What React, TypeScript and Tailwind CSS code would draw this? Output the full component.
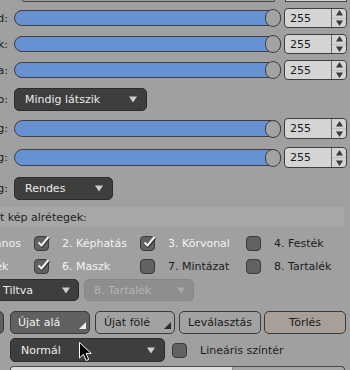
import React from "react";

const DownArrow = ({ color = "#cfcfcf" }: { color?: string }) => (
  <svg width="8" height="7" viewBox="0 0 8 7">
    <path d="M0 0.5 H8 L4 6.5 Z" fill={color} />
  </svg>
);

const Spin = ({ h }: { h: string }) => (
  <div className={`ml-[3px] w-[63px] ${h} flex shrink-0 rounded-[4px] border border-[#3e3e3e] bg-[#d4d4d4] overflow-hidden`}>
    <div className="flex-1 flex items-center pl-[5px] text-[#1a1a1a]">255</div>
    <div className="w-[15px] border-l border-[#6a6a6a] flex flex-col">
      <div className="flex-1 flex items-center justify-center border-b border-[#bdbdbd]">
        <svg width="7" height="6" viewBox="0 0 7 6">
          <path d="M0 5.5 H7 L3.5 0 Z" fill="#3a3a3a" />
        </svg>
      </div>
      <div className="flex-1 flex items-center justify-center">
        <svg width="7" height="6" viewBox="0 0 7 6">
          <path d="M0 0.5 H7 L3.5 6 Z" fill="#3a3a3a" />
        </svg>
      </div>
    </div>
  </div>
);

const Label = ({ t }: { t: string }) => (
  <div className="w-[14px] shrink-0 flex justify-end pr-[6px] whitespace-nowrap text-[#1a1a1a]">{t}</div>
);

const SliderRow = ({ label, rowCls, sh, spinH }: { label: string; rowCls: string; sh: string; spinH: string }) => (
  <div className={`flex items-center ${rowCls}`}>
    <Label t={label} />
    <div className={`relative w-[267px] ${sh} shrink-0 rounded-full border border-[#3e3e3e] bg-[#6691d3]`}>
      <div className="absolute right-[-1px] top-1/2 -translate-y-1/2 w-[16px] h-[18px] rounded-full border border-[#3e3e3e] bg-[#a3a3a3]" />
    </div>
    <Spin h={spinH} />
  </div>
);

const Check = ({ on }: { on: boolean }) => (
  <div className="relative w-[15px] h-[15px] shrink-0 rounded-[4px] border border-[#3a3a3a] bg-[#626262]">
    {on && (
      <svg className="absolute left-[1px] top-[-2px] overflow-visible" width="14" height="14" viewBox="0 0 14 14">
        <path d="M2.5 7.5 L5.5 10.5 L12.5 2" fill="none" stroke="#2e2e2e" strokeWidth="2.6" transform="translate(0.5 0.8)" />
        <path d="M2.5 7.5 L5.5 10.5 L12.5 2" fill="none" stroke="#f4f4f4" strokeWidth="2" />
      </svg>
    )}
  </div>
);

const Cell = ({ on, text }: { on: boolean; text: string }) => (
  <div className="w-[106px] shrink-0 flex items-center">
    <Check on={on} />
    <span className={`ml-[13px] whitespace-nowrap ${on ? "text-[#f2f2f2]" : "text-[#1c1c1c]"}`}>{text}</span>
  </div>
);

const Corner = ({ color }: { color: string }) => (
  <svg className="absolute right-[3px] bottom-[4px]" width="7" height="7" viewBox="0 0 7 7">
    <path d="M7 0 V7 H0 Z" fill={color} />
  </svg>
);

export default function App() {
  return (
    <div className="relative w-[350px] h-[370px] overflow-hidden bg-[#a0a0a0] font-['DejaVu_Sans',sans-serif] text-[11px] leading-none">
      {/* top remnant */}
      <div className="flex h-[2px]">
        <div className="ml-[22px] w-[253px] h-[2px] border-b border-x border-[#444] rounded-b-[2px]" />
        <div className="ml-[10px] w-[62px] h-[2px] border-b border-x border-[#444] bg-[#d4d4d4]" />
      </div>

      <SliderRow label="d:" rowCls="mt-[6px] h-[20px]" sh="h-[16px]" spinH="h-[20px]" />
      <SliderRow label="k:" rowCls="mt-[6px] h-[20px]" sh="h-[16px]" spinH="h-[20px]" />
      <SliderRow label="a:" rowCls="mt-[6px] h-[20px]" sh="h-[16px]" spinH="h-[20px]" />

      <div className="flex items-center mt-[8px] h-[23px]">
        <Label t="o:" />
        <div className="w-[133px] h-[23px] rounded-[5px] border border-[#2c2c2c] bg-[#3e3e3e] flex items-center justify-between pl-[10px] pr-[9px] text-[#ececec]">
          <span>Mindig látszik</span>
          <DownArrow />
        </div>
      </div>

      <SliderRow label="g:" rowCls="mt-[7px] h-[21px]" sh="h-[17px]" spinH="h-[21px]" />
      <SliderRow label="g:" rowCls="mt-[8px] h-[21px]" sh="h-[17px]" spinH="h-[21px]" />

      <div className="flex items-center mt-[9px] h-[23px]">
        <Label t="g:" />
        <div className="w-[99px] h-[23px] rounded-[5px] border border-[#2c2c2c] bg-[#3e3e3e] flex items-center justify-between pl-[10px] pr-[9px] text-[#ececec]">
          <span>Rendes</span>
          <DownArrow />
        </div>
      </div>

      <div className="mt-[7px] h-[20px] w-[344px] bg-[#a7a7a7] flex items-center text-[#1e1e1e] whitespace-nowrap">
        t kép alrétegek:
      </div>

      <div className="mt-[5px] ml-[-72px] flex flex-col">
        <div className="flex items-center h-[22px]">
          <Cell on={true} text="1. Általános" />
          <Cell on={true} text="2. Képhatás" />
          <Cell on={true} text="3. Körvonal" />
          <Cell on={false} text="4. Festék" />
        </div>
        <div className="flex items-center h-[22px] mt-[1px]">
          <Cell on={true} text="5. Árnyék" />
          <Cell on={true} text="6. Maszk" />
          <Cell on={false} text="7. Mintázat" />
          <Cell on={false} text="8. Tartalék" />
        </div>
      </div>

      <div className="flex mt-[2px] h-[22px]">
        <div className="ml-[-8px] w-[87px] h-[22px] rounded-[5px] border border-[#2c2c2c] bg-[#3e3e3e] flex items-center justify-between pl-[10px] pr-[8px] text-[#ececec]">
          <span>Tiltva</span>
          <DownArrow />
        </div>
        <div className="ml-[5px] w-[110px] h-[22px] rounded-[5px] border border-[#868686] bg-[#8e8e8e] flex items-center justify-between pl-[9px] pr-[8px] text-[#b3b3b3]">
          <span>8. Tartalék</span>
          <DownArrow color="#a8a8a8" />
        </div>
      </div>

      <div className="flex mt-[10px] h-[23px]">
        <div className="ml-[-71px] w-[75px] h-[23px] rounded-[5px] border border-[#3a3a3a] bg-[#5f5f5f]" />
        <div className="relative ml-[6px] w-[80px] h-[23px] rounded-[5px] border border-[#3a3a3a] bg-[#606060] flex items-center pl-[7px] text-[#f2f2f2]">
          Újat alá
          <Corner color="#f0f0f0" />
        </div>
        <div className="relative ml-[5px] w-[80px] h-[23px] rounded-[5px] border border-[#3a3a3a] bg-[#a2a2a2] flex items-center pl-[8px] text-[#1a1a1a]">
          Újat fölé
          <Corner color="#2a2a2a" />
        </div>
        <div className="ml-[4px] w-[82px] h-[23px] rounded-[5px] border border-[#3a3a3a] bg-[#a2a2a2] flex items-center justify-center text-[#1a1a1a]">
          Leválasztás
        </div>
        <div className="ml-[3px] w-[82px] h-[23px] rounded-[5px] border border-[#3a3a3a] bg-[#a99f99] flex items-center justify-center text-[#1a1a1a]">
          Törlés
        </div>
      </div>

      <div className="flex items-center mt-[4px] h-[24px]">
        <div className="ml-[10px] w-[155px] h-[24px] rounded-[5px] border border-[#2c2c2c] bg-[#3e3e3e] flex items-center justify-between pl-[10px] pr-[9px] text-[#ececec]">
          <span>Normál</span>
          <DownArrow />
        </div>
        <div className="ml-[7px]">
          <Check on={false} />
        </div>
        <span className="ml-[13px] text-[#1c1c1c] whitespace-nowrap">Lineáris színtér</span>
      </div>

      <div className="mt-[4px] ml-[10px] w-[335px] h-[10px] rounded-t-[4px] border border-b-0 border-[#4a4a4a] bg-[#a5a5a5] flex overflow-hidden">
        <div className="w-[222px] h-full bg-[#dedede] border-r border-[#8a8a8a]" />
      </div>

      {/* mouse cursor */}
      <svg className="absolute left-[79px] top-[342px]" width="14" height="20" viewBox="0 0 14 20">
        <path d="M0.5 0.5 L0.5 16 L4.4 12.3 L7.1 18.5 L9.7 17.4 L7.1 11.4 L12.2 11.4 Z" fill="#000" stroke="#fff" strokeWidth="1" strokeLinejoin="round" />
      </svg>
    </div>
  );
}
